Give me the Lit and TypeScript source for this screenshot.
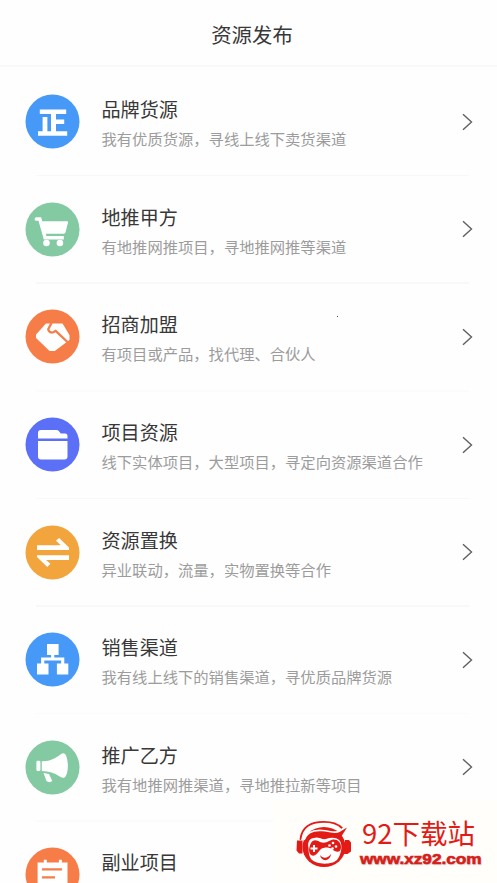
import { LitElement, html, css, svg } from "lit";
import { customElement, property } from "lit/decorators.js";

const icons: Record<string, unknown> = {
  brand: svg`<path fill="#fff" d="M14.8 15.4H41.2V20H31V25.6H39.2V30H31V37.2H42.2V41.8H13V37.2H17.6V23H22.4V37.2H26V20H14.8Z"/>`,
  cart: svg`<g fill="#fff"><path d="M11.3 15.2h4.8l1.2 4.1h24.4c1 0 1.5.5 1.3 1.3l-2.4 9.4c-.3 1.1-1 1.7-2 1.7H20.8l.6 2.4h17.4v3.3H18.8L13.5 18.8h-2.2c-2.2 0-2.2-3.6 0-3.6z"/><circle cx="21.5" cy="41" r="3.3"/><circle cx="34.9" cy="41" r="3.3"/></g>`,
  hands: svg`<path fill="#fff" stroke="#fff" stroke-width="2" stroke-linejoin="round" d="M21.5 15.5H37L43.5 26.5V30.5L29.5 41H25L12 28.5V26Z"/><path fill="none" stroke="#f67d47" stroke-width="2.3" stroke-linejoin="round" d="M26.5 14L23.2 20.2C24.2 24.2 28 24.4 30.6 21.8L42.5 33"/>`,
  folder: svg`<g fill="#fff"><path d="M13 21.5V16q0-3 3-3h15.5q1.5 0 2.5 1.2l1.8 2.3H40q2.5 0 2.5 2.5v2.5z"/><path d="M13 24h29.5v15.5q0 3-3 3H16q-3 0-3-3z"/></g>`,
  swap: svg`<path fill="#fff" d="M12 20.2H35.8L31 15.7L34.1 13L44 22.5V24.9H12ZM44 30.2V34.9H21L25.4 38.8L22.3 41.9L12 32.1V30.2Z"/>`,
  tree: svg`<g fill="#fff"><path d="M22 12h11.6v11H22zM12 31.6h11.5v11H12zM31.9 31.6h11.4v11H31.9z"/><path fill="none" stroke="#fff" stroke-width="3.2" d="M27.7 22v6M17.7 33v-6h20v6"/></g>`,
  horn: svg`<g fill="#fff"><rect x="11.4" y="20.7" width="4" height="10.4" rx="1.3"/><path d="M16.8 21.2C25 21.5 31 18.2 36 14c2.4-1.5 4.4-.6 5.4 2.6 2.1 6.5 1.9 13.3-.2 18.6-1.2 3-3.6 3.4-6 1.5C29.5 33 24 31 16.8 30.9zM18.5 33.1l5.5.8 3.3 7.2c-1.8 1.5-4.2 1.3-5.8 0z"/></g>`,
  note: svg`<path fill="#fff" d="M12.6 15.5h6.2v-2.7h3v2.7h12.1v-2.7h3v2.7h5.6V43H12.6z"/><path fill="none" stroke="#f67d47" stroke-width="2.3" d="M17 22.4h20M17 30.4h13"/>`,
};

interface Entry {
  icon: string;
  color: string;
  title: string;
  note: string;
}

const entries: Entry[] = [
  { icon: "brand", color: "#4799f7", title: "品牌货源", note: "我有优质货源，寻线上线下卖货渠道" },
  { icon: "cart", color: "#83caa3", title: "地推甲方", note: "有地推网推项目，寻地推网推等渠道" },
  { icon: "hands", color: "#f67d47", title: "招商加盟", note: "有项目或产品，找代理、合伙人" },
  { icon: "folder", color: "#5b70f7", title: "项目资源", note: "线下实体项目，大型项目，寻定向资源渠道合作" },
  { icon: "swap", color: "#f3a53d", title: "资源置换", note: "异业联动，流量，实物置换等合作" },
  { icon: "tree", color: "#4799f7", title: "销售渠道", note: "我有线上线下的销售渠道，寻优质品牌货源" },
  { icon: "horn", color: "#83caa3", title: "推广乙方", note: "我有地推网推渠道，寻地推拉新等项目" },
  { icon: "note", color: "#f67d47", title: "副业项目", note: "" },
];

@customElement("resource-row")
class ResourceRow extends LitElement {
  @property({ attribute: false }) entry!: Entry;

  static styles = css`
    :host {
      display: flex;
      align-items: center;
      box-sizing: border-box;
      height: 107.6px;
      flex: none;
      padding: 0 22px 0 25px;
    }
    .icon { width: 55px; height: 55px; flex: none; }
    .copy { flex: 1; margin-left: 21.5px; padding-top: 0.8px; white-space: nowrap; }
    .title { font-size: 19.1px; line-height: 32px; color: #383838; }
    .note { font-size: 15.3px; line-height: 26px; height: 26px; color: #9c9c9c; }
    .arrow { width: 14px; height: 20px; flex: none; }
  `;

  render() {
    const e = this.entry;
    return html`
      <svg class="icon" viewBox="0 0 55 55">
        <circle cx="27.5" cy="27.5" r="27" fill=${e.color}></circle>
        ${icons[e.icon]}
      </svg>
      <div class="copy">
        <div class="title">${e.title}</div>
        <div class="note">${e.note}</div>
      </div>
      <svg class="arrow" viewBox="0 0 14 20">
        <path d="M2 2.2L10.5 10L2 17.8" fill="none" stroke="#606060" stroke-width="1.4"></path>
      </svg>
    `;
  }
}

@customElement("app-root")
class AppRoot extends LitElement {
  static styles = css`
    :host {
      display: flex;
      flex-direction: column;
      position: relative;
      height: 883px;
      overflow: hidden;
      background: #fefefe;
      font-family: "Noto Sans CJK SC", sans-serif;
    }
    .header {
      flex: none;
      box-sizing: border-box;
      height: 67px;
      padding: 3px 0 0 7px;
      border-bottom: 2px solid #f8f8f8;
      text-align: center;
      font-size: 20.4px;
      line-height: 62px;
      color: #383838;
    }
    .list { display: flex; flex-direction: column; padding-top: 1px; }
    .rule { flex: none; height: 1.5px; margin: -0.75px 28px -0.75px 36px; background: #f8f8f8; }
    .rule.faint { background: #fbfbfb; }
    .speck { position: absolute; left: 337px; top: 316px; width: 1px; height: 1px; background: #444; }
    .mark {
      position: absolute;
      left: 273px;
      top: 801px;
      width: 224px;
      height: 82px;
      background: #fffefa;
    }
  `;

  render() {
    return html`
      <div class="header">资源发布</div>
      <div class="list">
        ${entries.map((e, i) => html`
          ${i ? html`<div class="rule ${i === 3 || i > 5 ? "faint" : ""}"></div>` : ""}
          <resource-row .entry=${e}></resource-row>
        `)}
      </div>
      <div class="speck"></div>
      <svg class="mark" viewBox="0 0 224 82">
        <path d="M27.5 38C29 25 39 20.8 51 20.8C59 20.8 65 23 69 27" fill="none" stroke="#e21b16" stroke-width="1.8" stroke-linecap="round"></path>
        <path fill="#e21b16" d="M24 39.5h5.5v13H26L23.5 49.5zM72 39h4l2 2.5v9l-3.5 2.5h-3.5z"></path>
        <ellipse cx="51" cy="46" rx="21.5" ry="20" fill="#e21b16"></ellipse>
        <path d="M31 39C34 30 42 29 49 29.5C57 30 62 33 67 30L74 24" fill="none" stroke="#fffefa" stroke-width="1.6"></path>
        <path d="M60 35L74 26.5L68 36Z" fill="#e21b16"></path>
        <path fill="#fff" d="M35.5 47C34 41 37 37 41 37C45 35 49 39 53 38C58 36 64 36 67 40C70 45 68 54 64 59C59 64 43 64 38 58C36 55 35.5 51 35.5 47Z"></path>
        <path fill="#e21b16" d="M38 42C40 38 44 39 47 41C50 42 53 42 56 40C62 36 68 40 68 46C68 52 63 52 59 48C56 46 51 46 48 48C45 51 42 57 38 54C35 51 36 46 38 42Z"></path>
        <path d="M37.5 47.5h7M41 44v7" stroke="#fff" stroke-width="2"></path>
        <g fill="#fff"><circle cx="56.5" cy="44.5" r="1.3"></circle><circle cx="60" cy="42" r="1.3"></circle><circle cx="63" cy="45.5" r="1.3"></circle><circle cx="59.5" cy="47.5" r="1.3"></circle></g>
        <path d="M47 54C50 58 55 57.5 58 53C57 61 48 61 47 54Z" fill="#e21b16"></path>
        <text x="89" y="42.5" font-size="27.5" fill="#e21b16">92下载站</text>
        <g font-family="Liberation Sans" font-weight="700" font-size="14" stroke-width=".6">
          <text x="87.8" y="63.9" fill="#e0dcd8" stroke="#e0dcd8" textLength="121.5" lengthAdjust="spacingAndGlyphs">www.xz92.com</text>
          <text x="87" y="63" fill="#d71e19" stroke="#d71e19" textLength="121.5" lengthAdjust="spacingAndGlyphs">www.xz92.com</text>
        </g>
      </svg>
    `;
  }
}
